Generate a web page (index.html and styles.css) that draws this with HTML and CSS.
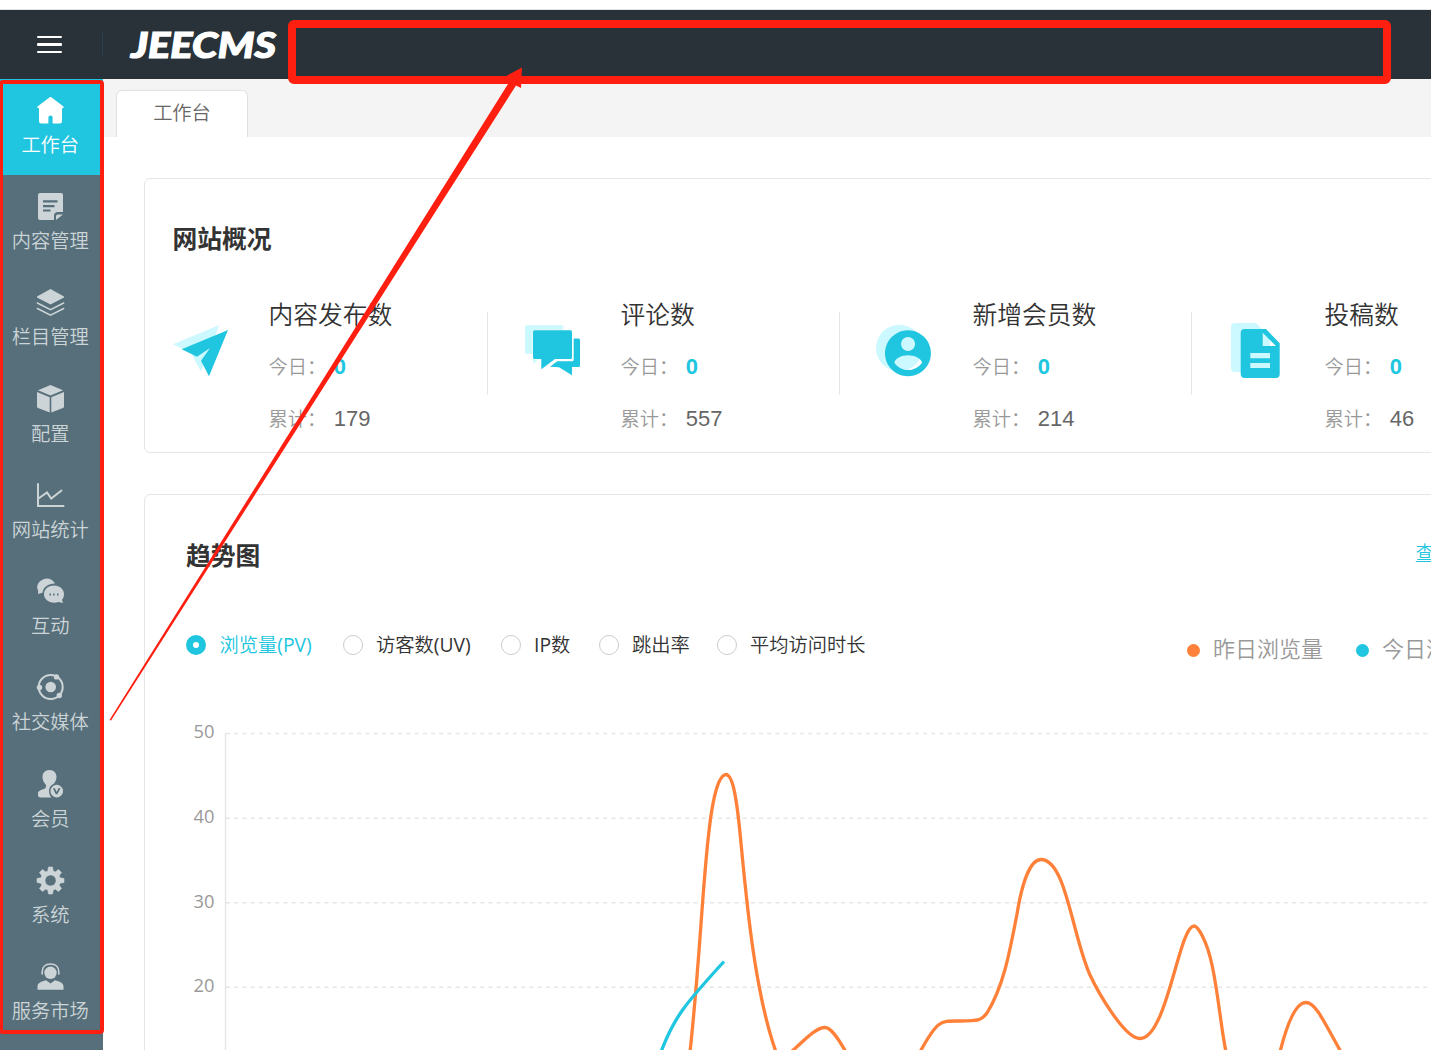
FILE: index.html
```html
<!DOCTYPE html>
<html lang="zh-CN">
<head>
    <meta charset="UTF-8">
    <meta name="viewport" content="width=device-width, initial-scale=1.0">
    <title>JEECMS 工作台</title>
    <link rel="stylesheet" href="styles.css">
</head>
<body>
    <header class="header">
        <div class="menu-toggle">
            <span></span>
            <span></span>
            <span></span>
        </div>
        <svg class="logo" width="156" height="50" viewBox="0 0 156 50">
            <text class="logo-text" x="4" y="38" textLength="145" lengthAdjust="spacingAndGlyphs">JEECMS</text>
        </svg>
    </header>

    <div class="layout">
        <nav class="sidebar">
            <a class="nav-item active">
                <svg class="nav-icon" viewBox="0 0 27 27"><path d="M12 .8Q13.500-.6 15 .8L26.500 9.500Q27.300 11 25.500 11.200H25V24Q25 26.500 22.500 26.500H15.600V20.500Q15.600 18.500 13.500 18.500T11.400 20.500V26.500H4.500Q2 26.500 2 24V11.200H1.500Q-.3 11 .5 9.500Z"/></svg>
                <span>工作台</span>
            </a>
            <a class="nav-item">
                <svg class="nav-icon" viewBox="0 0 27 27"><path fill-rule="evenodd" d="M3 0H24Q26 0 26 2V19H21Q17 19 17 23V27H3Q1 27 1 25V2Q1 0 3 0ZM6 7.200V9.500H20.500V7.200ZM6 12V14.200H17.500V12ZM6 16.400V18.600H13.500V16.400Z"/><path d="M19 27V23Q19 21.500 21 21.500H26Z"/></svg>
                <span>内容管理</span>
            </a>
            <a class="nav-item">
                <svg class="nav-icon" viewBox="0 0 27 27"><path d="M13.500 0L27 7.500V8.500L13.500 15.500L0 8.500V7.500Z"/><path class="stroke" d="M.3 14L13.500 20.700L26.700 14M.3 19.500L13.500 26.200L26.700 19.500" stroke-width="1.500"/></svg>
                <span>栏目管理</span>
            </a>
            <a class="nav-item">
                <svg class="nav-icon" viewBox="0 0 27 27"><path d="M13.500 0L26 5.200L13.500 10.500L1 5.200ZM0 7L12.700 12.300V27.500L1 23Q0 22.500 0 21.500ZM27 7L14.300 12.300V27.500L26 23Q27 22.500 27 21.500Z"/></svg>
                <span>配置</span>
            </a>
            <a class="nav-item">
                <svg class="nav-icon" viewBox="0 0 27 27"><path class="stroke" d="M1 2V24H26.500M1.500 16.500L10 10.500L14.200 16.500L24.500 8.500" stroke-width="2"/></svg>
                <span>网站统计</span>
            </a>
            <a class="nav-item">
                <svg class="nav-icon" viewBox="0 0 27 27"><path d="M18 5.500C15.500 1 10.500-.3 6.500 1.200C1 3.200-1.300 8.500 1.200 12.500L1 16L5.500 14.800C6 9.500 11 5.500 18 5.500Z"/><path fill-rule="evenodd" d="M17 7.500C23 7.500 27 11.500 27 16.200C27 18.500 26 20.500 25 21.700L26 25L21.500 23.900C14 26.500 7 22 7 16.200C7 11.500 11 7.500 17 7.500ZM12.500 15.500V17.500H14V15.500ZM16.200 15.500V17.500H17.700V15.500ZM20 15.500V17.500H21.500V15.500Z"/></svg>
                <span>互动</span>
            </a>
            <a class="nav-item">
                <svg class="nav-icon" viewBox="0 0 27 27"><circle class="stroke" cx="13.700" cy="13" r="12" stroke-width="2"/><circle cx="13.700" cy="13" r="5.300"/><circle cx="19.500" cy="2.900" r="2.700"/><circle cx="2.500" cy="13.500" r="2.700"/><circle cx="22.300" cy="21.500" r="2.700"/></svg>
                <span>社交媒体</span>
            </a>
            <a class="nav-item">
                <svg class="nav-icon" viewBox="0 0 27 27"><path d="M12.500 0C17 0 19.500 3 19.500 7C19.500 10 18 12.500 16.500 14C13.500 15.300 12 18 12 21C12 23.500 13 26 14.500 27.500H4Q1 27.500 1 25V23C1 20.500 5.500 19.500 8 18.500Q9.500 17.500 9 15C7 13 5.500 10 5.500 7C5.500 3 8 0 12.500 0Z"/><path fill-rule="evenodd" d="M19.800 14.800A6.300 6.300 0 1 1 19.700 14.800ZM16 18.500L18.800 24.200H20.300L23.500 18.300L21.700 17.900L19.600 22L17.700 18Z"/></svg>
                <span>会员</span>
            </a>
            <a class="nav-item">
                <svg class="nav-icon" viewBox="0 0 27 27"><path fill-rule="evenodd" stroke="currentColor" stroke-width=".6" stroke-linejoin="round" d="M11.500 0H15.500L16.200 4L18.200 4.900L21.500 2.500L24.500 5.500L22.200 8.800L23 10.800L27 11.500V15.500L23 16.200L22.200 18.200L24.500 21.500L21.500 24.500L18.200 22.100L16.200 23L15.500 27H11.500L10.800 23L8.800 22.100L5.500 24.500L2.500 21.500L4.800 18.200L4 16.200L0 15.500V11.500L4 10.800L4.800 8.800L2.500 5.500L5.500 2.500L8.800 4.900L10.800 4ZM13.500 8A5.500 5.500 0 1 0 13.600 8Z"/></svg>
                <span>系统</span>
            </a>
            <a class="nav-item">
                <svg class="nav-icon" viewBox="0 0 27 27"><path class="stroke" d="M5.200 11V9C5.200 4 8.500 1 13.500 1S21.800 4 21.800 9V11" stroke-width="1.600"/><circle cx="13.500" cy="9.800" r="6.200"/><path d="M.5 26.800V23.500C.5 19.500 4.500 18.500 9 17.200L13.500 20.500L18 17.200C22.500 18.500 26.500 19.500 26.500 23.500V26.800Z"/></svg>
                <span>服务市场</span>
            </a>
        </nav>

        <main class="main">
            <div class="tabs">
                <div class="tab">工作台</div>
            </div>

            <section class="card overview">
                <h2 class="card-title">网站概况</h2>
                <div class="stats">
                    <div class="stat">
                        <svg class="stat-icon" viewBox="0 0 58 58">
                            <path class="light" d="M47.300 2L1 21.300L16.300 28.700L29.300 20L20.300 32.700L29 48.500Z"/>
                            <path class="dark" d="M56 7L9.700 26.300L25 33.700L38 25L29 37.700L37 53.300Z"/>
                        </svg>
                        <div class="stat-body">
                            <div class="stat-name">内容发布数</div>
                            <div class="stat-row">今日：<b class="today">0</b></div>
                            <div class="stat-row">累计：<span class="total">179</span></div>
                        </div>
                    </div>
                    <div class="stat">
                        <svg class="stat-icon" viewBox="0 0 58 58">
                            <path class="light" d="M2.500 2.300H38Q39.300 2.300 39.300 3.800V30.700H20L9.300 41V30.700H2.500Q1 30.700 1 29.200V3.800Q1 2.300 2.500 2.300Z"/>
                            <path class="gap" d="M10.500 7.300H46.500Q48 7.300 48 8.800V34.500Q48 36 46.500 36H31L17.300 46.300V36H10.500Q9 36 9 34.500V8.800Q9 7.300 10.500 7.300Z"/>
                            <path class="dark" d="M10.500 7.300H46.500Q48 7.300 48 8.800V34.500Q48 36 46.500 36H31L17.300 46.300V36H10.500Q9 36 9 34.500V8.800Q9 7.300 10.500 7.300ZM49.700 15.500H54.500Q56 15.500 56 17V42.500Q56 44 54.500 44H48V52.300L35 44.200L26 43.700L33.300 38.300H48.200Q49.700 38.300 49.700 36.800Z"/>
                        </svg>
                        <div class="stat-body">
                            <div class="stat-name">评论数</div>
                            <div class="stat-row">今日：<b class="today">0</b></div>
                            <div class="stat-row">累计：<span class="total">557</span></div>
                        </div>
                    </div>
                    <div class="stat">
                        <svg class="stat-icon" viewBox="0 0 58 58">
                            <circle class="light" cx="23.300" cy="25" r="23.200"/>
                            <path class="dark" fill-rule="evenodd" d="M32 7.300A23 23 0 1 1 31.900 7.300ZM32 14A7 7 0 1 0 32.100 14ZM18.300 39.700C22 44.800 27 47 32 47S42.500 44.800 46 39.700C45 35 38 32.300 32 32.300S19.500 35 18.300 39.700Z"/>
                        </svg>
                        <div class="stat-body">
                            <div class="stat-name">新增会员数</div>
                            <div class="stat-row">今日：<b class="today">0</b></div>
                            <div class="stat-row">累计：<span class="total">214</span></div>
                        </div>
                    </div>
                    <div class="stat">
                        <svg class="stat-icon" viewBox="0 0 58 58">
                            <path class="light" d="M7 0H28L42 14.300V45Q42 49 38 49H7Q3 49 3 45V4Q3 0 7 0Z"/>
                            <path class="dark" fill-rule="evenodd" d="M16.700 6H38L51.700 20.300V51Q51.700 55 47.700 55H16.700Q12.700 55 12.700 51V10Q12.700 6 16.700 6ZM34.700 9.700V23H48ZM22.300 30V35.300H42V30ZM22.300 40V45H42V40Z"/>
                        </svg>
                        <div class="stat-body">
                            <div class="stat-name">投稿数</div>
                            <div class="stat-row">今日：<b class="today">0</b></div>
                            <div class="stat-row">累计：<span class="total">46</span></div>
                        </div>
                    </div>
                </div>
            </section>

            <section class="card trend">
                <div class="trend-head">
                    <h2 class="card-title">趋势图</h2>
                    <a class="more">查看</a>
                </div>
                <div class="trend-bar">
                    <div class="radios">
                        <label class="radio checked"><i></i>浏览量<span class="latin">(PV)</span></label>
                        <label class="radio uv"><i></i>访客数<span class="latin">(UV)</span></label>
                        <label class="radio ip"><i></i><span class="latin">IP</span>数</label>
                        <label class="radio bounce"><i></i>跳出率</label>
                        <label class="radio"><i></i>平均访问时长</label>
                    </div>
                    <div class="legend">
                        <span class="legend-item"><i class="dot orange"></i>昨日浏览量</span>
                        <span class="legend-item"><i class="dot cyan"></i>今日浏览量</span>
                    </div>
                </div>
                <svg class="chart" width="1286" height="350" viewBox="145 700 1286 350">
                    <g class="grid">
                        <path d="M226 733.500H1431M226 818.200H1431M226 902.700H1431M226 987.200H1431"/>
                    </g>
                    <path class="axis" d="M225.500 733V1050"/>
                    <g class="axis-label">
                        <text x="214.500" y="738">50</text>
                        <text x="214.500" y="823">40</text>
                        <text x="214.500" y="908">30</text>
                        <text x="214.500" y="992">20</text>
                    </g>
                    <path class="line yesterday" d="M690 1052C700 960 702 890 709 831C713 795 719 774.500 726 774.500C733 774.500 737 800 740.500 838C746 895 754 990 776 1052M791 1052C802 1043 815 1027.500 825 1027.500C831 1027.500 838 1038 846 1052M920 1052C938 1019 941 1021 960 1021C979 1021 982 1020 987 1013C1003 987 1009 956 1017 914C1022 883 1030 859.500 1041 859.500C1066 859.500 1072 935 1090 975C1097 990 1124 1038.500 1140 1038.500C1167 1038.500 1179 926 1194 926C1198 926 1207 941 1212 965C1218 992 1221 1028 1226 1052M1280 1052C1287 1024 1296 1002.500 1306 1002.500C1316 1002.500 1325 1024 1341 1052"/>
                    <path class="line today-line" d="M661 1052C674 1017 686 1003 724 961.500"/>
                </svg>
            </section>
        </main>
    </div>

    <!-- red markers over the top bar and the side menu -->
    <div class="mark mark-top"></div>
    <div class="mark mark-side"></div>
    <svg class="arrow" width="1431" height="1050" viewBox="0 0 1431 1050">
        <path d="M109.500 720L508 84L499 80L522 67.500L521 88L516 85.500L111 720.500Z"/>
    </svg>
</body>
</html>
```
FILE: styles.css
```css
* {
    box-sizing: border-box;
}

body {
    margin: 0;
    padding-top: 9px;
    width: 1431px;
    height: 1050px;
    overflow: hidden;
    position: relative;
    background: #fff;
    font-family: "Open Sans", "Noto Sans CJK SC", sans-serif;
    font-weight: 350;
    font-size: 19.25px;
    color: #333;
}

.header {
    display: flex;
    align-items: center;
    height: 70px;
    border-top: 1px solid #e3e5e6;
    background: #283238;
}

.menu-toggle {
    display: flex;
    flex-direction: column;
    justify-content: center;
    gap: 5px;
    width: 103px;
    height: 25px;
    padding-left: 37px;
    border-right: 1px solid #2d3e4a;
}

.menu-toggle span {
    width: 25px;
    height: 2.5px;
    border-radius: 1px;
    background: #fff;
}

.logo {
    margin-left: 24px;
}

.logo-text {
    font-family: Lato, sans-serif;
    font-size: 36px;
    font-weight: 900;
    font-style: italic;
    fill: #fff;
    stroke: #fff;
    stroke-width: 1.2;
}

.layout {
    display: flex;
    height: 971px;
}

.sidebar {
    flex: none;
    width: 103px;
    background: #566f7a;
}

.nav-item {
    display: flex;
    flex-direction: column;
    align-items: center;
    gap: 8.3px;
    height: 96.25px;
    padding: 17.5px 2.5px 0 0;
    line-height: 26px;
    color: #ccd4d7;
}

.nav-item.active {
    background: #20c5e0;
    color: #fff;
}

.nav-icon {
    width: 27px;
    height: 27px;
    overflow: visible;
    fill: currentColor;
}

.stroke {
    fill: none;
    stroke: currentColor;
    stroke-linecap: round;
}

.main {
    flex: 1;
    min-width: 0;
    overflow: hidden;
}

.tabs {
    height: 58px;
    padding: 11px 0 0 13px;
    background: #f4f4f4;
}

.tab {
    width: 132px;
    height: 47px;
    border: 1px solid #e0e0e0;
    border-bottom: none;
    border-radius: 6px 6px 0 0;
    background: #fff;
    line-height: 44px;
    text-align: center;
    color: #666;
}

.card {
    width: 1440px;
    margin: 41px 0 0 41px;
    border: 1px solid #e6e6e6;
    border-radius: 6px;
}

.card-title {
    margin: 0;
    font-size: 24.75px;
    font-weight: 700;
    line-height: 36px;
}

.overview {
    height: 275px;
    padding: 42px 0 0 27.5px;
}

.stats {
    display: flex;
    margin-top: 32px;
}

.stat {
    display: flex;
    flex: none;
    width: 352px;
}

.stat::after {
    content: "";
    width: 1px;
    height: 83px;
    margin: 23px 36.5px 0 auto;
    background: #e6e6e6;
}

.stat-icon {
    width: 58px;
    height: 58px;
    margin: 34px 38.5px 0 -.5px;
}

.light {
    fill: #ccf8ff;
}

.dark {
    fill: #20c5e0;
}

.gap {
    fill: #fff;
    stroke: #fff;
    stroke-width: 1;
}

.stat-name {
    font-size: 24.75px;
    line-height: 52px;
}

.stat-row {
    display: flex;
    line-height: 52px;
    color: #999;
}

.today,
.total {
    margin-left: 7.5px;
    font-family: "Liberation Sans", sans-serif;
    font-size: 22px;
}

.today {
    font-weight: 700;
    color: #20c5e0;
}

.total {
    font-weight: 400;
    color: #666;
}

.trend {
    height: 600px;
}

.trend-head {
    display: flex;
    height: 78px;
    padding: 43px 0 0 41px;
}

.more {
    margin: -4px 0 0 1155.500px;
    font-size: 17.9px;
    line-height: 36px;
    white-space: nowrap;
    text-decoration: underline;
    text-underline-offset: 2px;
    color: #20c5e0;
}

.trend-bar {
    display: flex;
    height: 127px;
    padding: 57px 0 0 41px;
}

.radios {
    display: flex;
    width: 1001px;
    line-height: 30px;
}

.radio {
    display: flex;
    align-items: center;
    flex: none;
    height: 30px;
    white-space: nowrap;
}

.radio i {
    width: 20px;
    height: 20px;
    margin-right: 13.5px;
    border: 1px solid #ccc;
    border-radius: 50%;
}

.radio.checked {
    width: 156.500px;
    color: #20c5e0;
}

.radio.checked i {
    border: 7px solid #20c5e0;
}

.radio.uv {
    width: 158px;
}

.radio.ip {
    width: 98px;
}

.radio.bounce {
    width: 118px;
}

.latin {
    font-weight: 400;
}

.legend {
    display: flex;
    gap: 33px;
    margin-top: 3px;
    font-size: 22px;
    line-height: 30px;
    color: #999;
}

.legend-item {
    display: flex;
    flex: none;
    height: 30px;
}

.dot {
    width: 13px;
    height: 13px;
    margin: 11px 13px 0 0;
    border-radius: 50%;
}

.orange {
    background: #ff8038;
}

.cyan {
    background: #20c5e0;
}

.chart {
    display: block;
}

.grid {
    fill: none;
    stroke: #e6e6e6;
    stroke-width: 1.4;
    stroke-dasharray: 4.1;
}

.axis {
    stroke: #e6e6e6;
    stroke-width: 1.4;
}

.axis-label {
    font-size: 18.3px;
    font-weight: 400;
    text-anchor: end;
    fill: #999;
}

.line {
    fill: none;
    stroke-width: 3.3;
}

.yesterday {
    stroke: #ff8038;
}

.today-line {
    stroke: #20c5e0;
}

.mark {
    position: absolute;
    border: 4px solid #ff1f10;
    border-radius: 4px;
}

.mark-top {
    left: 288px;
    top: 20px;
    width: 1103px;
    height: 64.400px;
    border-width: 8px;
    border-radius: 6px;
}

.mark-side {
    left: -1px;
    top: 79.500px;
    width: 104.500px;
    height: 954.500px;
}

.arrow {
    position: absolute;
    left: 0;
    top: 0;
    fill: #ff1f10;
}
```
